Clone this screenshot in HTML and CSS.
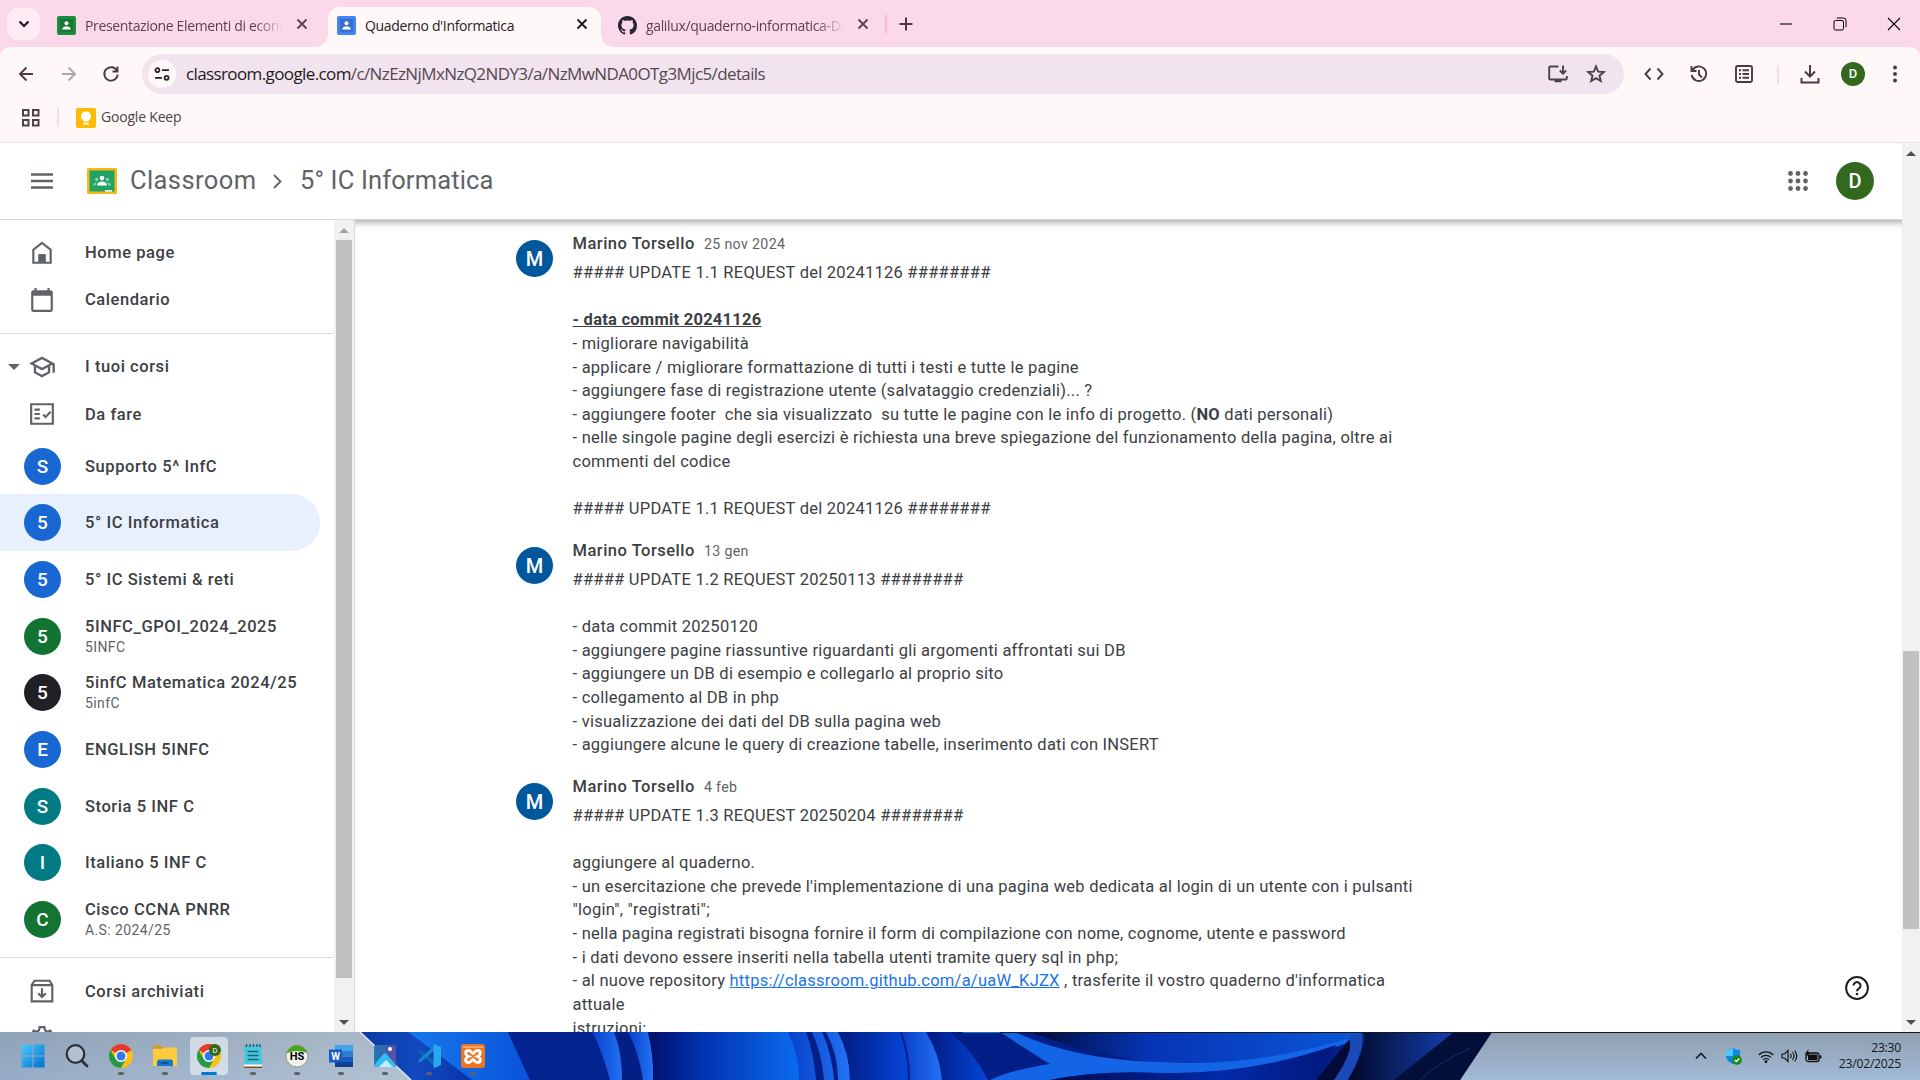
FILE: index.html
```html
<!DOCTYPE html>
<html lang="it">
<head>
<meta charset="utf-8">
<title>Quaderno d'Informatica</title>
<link rel="stylesheet" href="styles.css">
</head>
<body>
<svg class="defs" aria-hidden="true">
  <symbol id="close" viewBox="0 0 12 12"><path d="M1.5 1.5l9 9M10.5 1.5l-9 9" fill="none" stroke="currentColor" stroke-width="1.9"/></symbol>
  <symbol id="person" viewBox="0 0 20 20"><rect width="20" height="20" rx="2" fill="currentColor"/><rect x="3" y="3" width="14" height="14" fill="#000" opacity=".16"/><circle cx="10" cy="7.6" r="2.1" fill="#fff"/><path d="M5.5 14.2c0-2.3 2.4-3.4 4.5-3.4s4.500 1.100 4.500 3.400z" fill="#fff"/></symbol>
  <symbol id="chrome" viewBox="0 0 24 24"><circle cx="12" cy="12" r="12" fill="#fbc116"/><path d="M12 12L1.600 6A12 12 0 0 1 22.400 6z" fill="#e33b2e"/><path d="M1.600 6A12 12 0 0 0 12 24l5.200-9L12 12 6.800 15z" fill="#259a4a"/><circle cx="12" cy="12" r="6" fill="#fff"/><circle cx="12" cy="12" r="4.500" fill="#3479ea"/></symbol>
</svg>

<header class="browser">
  <div class="tabstrip">
    <button class="tab-search"><svg width="12" height="8" viewBox="0 0 12 8"><path d="M1.500 1.500L6 6l4.500-4.500" fill="none" stroke="#1f1a1c" stroke-width="2.200"/></svg></button>
    <div class="tab tab-first">
      <svg class="favicon green" viewBox="0 0 20 20"><use href="#person"/></svg>
      <span class="tab-title fade">Presentazione Elementi di economia</span>
      <svg class="tab-close"><use href="#close"/></svg>
    </div>
    <div class="tab tab-active">
      <svg class="favicon blue" viewBox="0 0 20 20"><use href="#person"/></svg>
      <span class="tab-title">Quaderno d'Informatica</span>
      <svg class="tab-close"><use href="#close"/></svg>
    </div>
    <div class="tab tab-last">
      <svg class="favicon" viewBox="0 0 16 16"><path fill="#24292f" d="M8 0C3.580 0 0 3.580 0 8c0 3.540 2.290 6.530 5.470 7.590.4.070.55-.17.55-.38 0-.19-.01-.82-.01-1.490-2.010.37-2.530-.49-2.690-.94-.09-.23-.48-.94-.82-1.130-.28-.15-.68-.52-.01-.53.63-.01 1.080.58 1.230.82.72 1.210 1.870.87 2.330.66.07-.52.28-.87.51-1.070-1.780-.2-3.640-.89-3.640-3.950 0-.87.31-1.590.82-2.150-.08-.2-.36-1.020.08-2.120 0 0 .67-.21 2.200.82.64-.18 1.320-.27 2-.27s1.360.09 2 .27c1.530-1.040 2.200-.82 2.200-.82.44 1.100.16 1.920.08 2.120.51.56.82 1.270.82 2.150 0 3.070-1.870 3.750-3.650 3.950.29.25.54.73.54 1.480 0 1.070-.01 1.930-.01 2.200 0 .21.15.46.55.38A8.010 8.010 0 0 0 16 8c0-4.420-3.580-8-8-8z"/></svg>
      <span class="tab-title fade">galilux/quaderno-informatica-Dev</span>
      <svg class="tab-close"><use href="#close"/></svg>
    </div>
    <i class="strip-sep"></i>
    <svg class="new-tab" viewBox="0 0 14 14"><path d="M7 .5v13M.5 7h13" stroke="#4d3946" stroke-width="2"/></svg>
    <div class="window-controls">
      <svg viewBox="0 0 14 14"><path d="M1 7h12" stroke="#000" stroke-width="1.100"/></svg>
      <svg viewBox="0 0 14 14" fill="none" stroke="#000"><rect x="1" y="3.500" width="9.500" height="9.500" rx="1.500"/><path d="M3.800 1h6.700a2.500 2.500 0 0 1 2.500 2.500v6.700"/></svg>
      <svg viewBox="0 0 14 14"><path d="M1 1l12 12M13 1L1 13" stroke="#000" stroke-width="1.100"/></svg>
    </div>
  </div>

  <div class="toolbar">
    <div class="nav-buttons">
      <svg viewBox="0 0 20 20" class="ink"><path d="M17 10H4M10.500 3.500L4 10l6.500 6.500"/></svg>
      <svg viewBox="0 0 20 20" class="ink dim"><path d="M3 10h13M9.500 3.500L16 10l-6.500 6.500"/></svg>
      <svg viewBox="0 0 20 20" class="ink"><path d="M15.800 6.500A6.700 6.700 0 1 0 16.700 10.500M16.500 2.500v5h-5"/></svg>
    </div>
    <div class="omnibox">
      <span class="site-info"><svg width="16" height="14" viewBox="0 0 16 14" fill="none" stroke="#2b2327" stroke-width="1.800"><circle cx="3.400" cy="3.200" r="2"/><path d="M8 3.200h7M1 10.800h7"/><circle cx="12.600" cy="10.800" r="2"/></svg></span>
      <span class="url"><b>classroom.google.com</b>/c/NzEzNjMxNzQ2NDY3/a/NzMwNDA0OTg3Mjc5/details</span>
      <svg viewBox="0 0 20 20" class="ink gray"><path d="M10.500 2.500H2.200a1 1 0 0 0-1 1v11a1 1 0 0 0 1 1h15.600a1 1 0 0 0 1-1V12"/><path d="M15 1.500v8M11.800 6.500L15 9.700l3.200-3.200"/><path d="M6.500 17h7" stroke-width="2.500"/></svg>
      <svg viewBox="0 0 20 20" class="ink gray"><path d="M10 2.500l2.200 5.100 5.500.5-4.200 3.600 1.300 5.400L10 14.200l-4.800 2.900 1.300-5.400-4.200-3.600 5.500-.5z"/></svg>
    </div>
    <div class="actions">
      <svg viewBox="0 0 20 20" class="ink"><path d="M6.500 4.500L1.500 10l5 5.500M13.500 4.500l5 5.500-5 5.500"/></svg>
      <svg viewBox="0 0 20 20" class="ink"><path d="M3.500 6.200A7.300 7.300 0 1 1 2.700 11M2.500 2v5h5M10 6v4.500l3 3"/></svg>
      <svg viewBox="0 0 20 20" class="ink"><rect x="2" y="2" width="16" height="16" rx="1.500"/><path d="M8.500 6.200H15M8.500 10H15M8.500 13.800H15M5 6.200h2M5 10h2M5 13.800h2"/></svg>
      <i class="bar-sep"></i>
      <svg viewBox="0 0 20 20" class="ink"><path d="M10 1v11M5 7.500l5 5 5-5M1.500 14v4.500h17V14" stroke-width="2"/></svg>
      <span class="mini-avatar">D</span>
      <svg viewBox="0 0 20 20" fill="#4d3946"><circle cx="10" cy="3.500" r="2"/><circle cx="10" cy="10" r="2"/><circle cx="10" cy="16.500" r="2"/></svg>
    </div>
  </div>

  <div class="bookmarks">
    <svg width="18" height="18" viewBox="0 0 18 18" fill="none" stroke="#4b4347" stroke-width="2"><path d="M1 1h5.500v5.500H1zM11 1h5.500v5.500H11zM1 11h5.500v5.500H1zM11 11h5.500v5.500H11z"/></svg>
    <i class="bar-sep"></i>
    <svg width="20" height="20" viewBox="0 0 20 20"><rect width="20" height="20" rx="2" fill="#fbbc04"/><path d="M10 3.500a4.800 4.800 0 0 0-2.600 8.900V13.500h5.200v-1.100A4.800 4.800 0 0 0 10 3.500zM7.400 14.800h5.200v1.700H7.400z" fill="#fff"/></svg>
    <span>Google Keep</span>
  </div>
</header>

<div class="page">
  <div class="app">
    <header class="app-bar">
      <svg width="22" height="16" viewBox="0 0 22 16"><path d="M0 1.500h22M0 8h22M0 14.500h22" stroke="#5f6368" stroke-width="2.300"/></svg>
      <svg class="logo" width="30" height="26" viewBox="0 0 30 26"><rect width="30" height="26" rx="1.500" fill="#f9b912"/><rect x="2.500" y="2.500" width="25" height="21" fill="#1fa463"/><circle cx="15" cy="10" r="2.300" fill="#fff"/><path d="M10 17c0-2.300 2.800-3.600 5-3.600s5 1.300 5 3.600v.5H10z" fill="#fff"/><g fill="#8ed0ae"><circle cx="9.700" cy="11.400" r="1.600"/><circle cx="20.300" cy="11.400" r="1.600"/><path d="M6 17.500c0-2 1.600-3 4-3.200-1 .9-1.300 1.900-1.300 3.200zM24 17.500c0-2-1.600-3-4-3.200 1 .9 1.300 1.900 1.300 3.200z"/></g><path d="M18 22h7v1.800h-7z" fill="#e9efe9"/></svg>
      <span class="brand">Classroom</span>
      <svg class="crumb" width="9" height="15" viewBox="0 0 9 15"><path d="M1 1l6.500 6.500L1 14" fill="none" stroke="#5f6368" stroke-width="1.800"/></svg>
      <span class="course-name">5° IC Informatica</span>
      <svg class="apps" width="20" height="20" viewBox="0 0 20 20" fill="#5f6368"><circle cx="2.500" cy="2.500" r="2.400"/><circle cx="10" cy="2.500" r="2.400"/><circle cx="17.500" cy="2.500" r="2.400"/><circle cx="2.500" cy="10" r="2.400"/><circle cx="10" cy="10" r="2.400"/><circle cx="17.500" cy="10" r="2.400"/><circle cx="2.500" cy="17.500" r="2.400"/><circle cx="10" cy="17.500" r="2.400"/><circle cx="17.500" cy="17.500" r="2.400"/></svg>
      <span class="avatar profile">D</span>
    </header>

    <div class="columns">
      <nav class="sidebar">
        <div class="menu">
          <div class="group">
            <a class="item"><svg viewBox="0 0 24 24"><path fill="none" stroke="currentColor" stroke-width="2" d="M4 21V9l8-6.300L20 9v12z"/><path d="M8.500 13h7v8h-7z"/></svg><span>Home page</span></a>
            <a class="item"><svg viewBox="0 0 24 24"><path d="M20 3h-1V1h-2v2H7V1H5v2H4c-1.100 0-2 .9-2 2v16c0 1.100.9 2 2 2h16c1.100 0 2-.9 2-2V5c0-1.100-.9-2-2-2zm0 18H4V8h16v13z"/></svg><span>Calendario</span></a>
          </div>
          <div class="group">
            <a class="item"><i class="expander"></i><svg class="wide" viewBox="0 0 24 24"><path d="M12 3L1 9l4 2.180v6L12 21l7-3.820v-6l2-1.090V17h2V9L12 3zm6.820 6L12 12.720 5.180 9 12 5.280 18.820 9zM17 15.990l-5 2.730-5-2.730v-3.720L12 15l5-2.730v3.720z"/></svg><span>I tuoi corsi</span></a>
            <a class="item"><svg viewBox="0 0 24 24"><path fill="none" stroke="currentColor" stroke-width="2" d="M2 3h20v18H2zM5 8h5M5 12h5M5 16h5M13 12.500l2.300 2.300L20 10"/></svg><span>Da fare</span></a>
            <a class="item course"><b class="avatar c-blue">S</b><span>Supporto 5^ InfC</span></a>
            <a class="item course selected"><b class="avatar c-blue">5</b><span>5° IC Informatica</span></a>
            <a class="item course"><b class="avatar c-blue">5</b><span>5° IC Sistemi &amp; reti</span></a>
            <a class="item course"><b class="avatar c-green">5</b><span>5INFC_GPOI_2024_2025<small>5INFC</small></span></a>
            <a class="item course"><b class="avatar c-black">5</b><span>5infC Matematica 2024/25<small>5infC</small></span></a>
            <a class="item course"><b class="avatar c-blue">E</b><span>ENGLISH 5INFC</span></a>
            <a class="item course"><b class="avatar c-teal">S</b><span>Storia 5 INF C</span></a>
            <a class="item course"><b class="avatar c-teal">I</b><span>Italiano 5 INF C</span></a>
            <a class="item course"><b class="avatar c-green">C</b><span>Cisco CCNA PNRR<small>A.S: 2024/25</small></span></a>
          </div>
          <div class="group">
            <a class="item"><svg viewBox="0 0 24 24"><path fill="none" stroke="currentColor" stroke-width="2" d="M2.500 6.500L5 2.500h14l2.500 4V21.500h-19zM2.500 6.500h19M12 9.500v8M8.500 14l3.500 3.500 3.500-3.500"/></svg><span>Corsi archiviati</span></a>
            <a class="item settings"><svg viewBox="0 0 24 24"><path fill="none" stroke="currentColor" stroke-width="2" d="M9.800 2h4.400l.6 3 2 1.200 2.900-1 2.200 3.800-2.300 2v2l2.300 2-2.200 3.800-2.900-1-2 1.200-.6 3H9.800l-.6-3-2-1.200-2.900 1L2.100 15l2.300-2v-2l-2.300-2 2.200-3.800 2.900 1 2-1.200z"/><circle cx="12" cy="12" r="3"/></svg><span>Impostazioni</span></a>
          </div>
        </div>
        <div class="scrollbar side-scroll"><i class="up off"></i><i class="thumb"></i><i class="down"></i></div>
      </nav>

      <main class="comments">
        <article class="post">
          <span class="avatar author">M</span>
          <div class="body">
            <div class="meta"><strong>Marino Torsello</strong><time>25 nov 2024</time></div>
            <p>##### UPDATE 1.1 REQUEST del 20241126 ########

<b class="due">- data commit 20241126</b>
- migliorare navigabilità
- applicare / migliorare formattazione di tutti i testi e tutte le pagine
- aggiungere fase di registrazione utente (salvataggio credenziali)... ?
- aggiungere footer  che sia visualizzato  su tutte le pagine con le info di progetto. (<b>NO</b> dati personali)
- nelle singole pagine degli esercizi è richiesta una breve spiegazione del funzionamento della pagina, oltre ai
commenti del codice

##### UPDATE 1.1 REQUEST del 20241126 ########</p>
          </div>
        </article>
        <article class="post">
          <span class="avatar author">M</span>
          <div class="body">
            <div class="meta"><strong>Marino Torsello</strong><time>13 gen</time></div>
            <p>##### UPDATE 1.2 REQUEST 20250113 ########

- data commit 20250120
- aggiungere pagine riassuntive riguardanti gli argomenti affrontati sui DB
- aggiungere un DB di esempio e collegarlo al proprio sito
- collegamento al DB in php
- visualizzazione dei dati del DB sulla pagina web
- aggiungere alcune le query di creazione tabelle, inserimento dati con INSERT</p>
          </div>
        </article>
        <article class="post">
          <span class="avatar author">M</span>
          <div class="body">
            <div class="meta"><strong>Marino Torsello</strong><time>4 feb</time></div>
            <p>##### UPDATE 1.3 REQUEST 20250204 ########

aggiungere al quaderno.
- un esercitazione che prevede l'implementazione di una pagina web dedicata al login di un utente con i pulsanti
"login", "registrati";
- nella pagina registrati bisogna fornire il form di compilazione con nome, cognome, utente e password
- i dati devono essere inseriti nella tabella utenti tramite query sql in php;
- al nuove repository <a>https://classroom.github.com/a/uaW_KJZX</a> , trasferite il vostro quaderno d'informatica
attuale
istruzioni:</p>
          </div>
        </article>
        <svg class="help" viewBox="0 0 24 24"><circle cx="12" cy="12" r="10.900" fill="none" stroke="#1f1f1f" stroke-width="2"/><path d="M8.500 9.600a3.500 3.500 0 1 1 5.300 3c-1.100.7-1.800 1.300-1.800 2.700" fill="none" stroke="#1f1f1f" stroke-width="2"/><circle cx="12" cy="18" r="1.300" fill="#1f1f1f"/></svg>
      </main>
    </div>
  </div>
  <div class="scrollbar page-scroll"><i class="up"></i><i class="thumb"></i><i class="down"></i></div>
</div>

<footer class="taskbar">
  <svg class="wallpaper" viewBox="0 0 1920 48" preserveAspectRatio="none">
    <defs>
      <linearGradient id="sky" x2="0" y2="1"><stop stop-color="#8e9fb0"/><stop offset="1" stop-color="#a3bad6"/></linearGradient>
      <linearGradient id="skyL"><stop stop-color="#8fa4bd" stop-opacity=".6"/><stop offset="1" stop-color="#bac6d2" stop-opacity=".7"/></linearGradient>
      <linearGradient id="w1"><stop stop-color="#0d3aa0"/><stop offset=".5" stop-color="#1249c0"/><stop offset="1" stop-color="#0a35a8"/></linearGradient>
      <linearGradient id="w2"><stop stop-color="#1878ec"/><stop offset="1" stop-color="#0852d8"/></linearGradient>
      <linearGradient id="w3"><stop stop-color="#020f68"/><stop offset=".35" stop-color="#0232b0"/><stop offset="1" stop-color="#0a6cf0"/></linearGradient>
      <linearGradient id="w4"><stop stop-color="#0840c8"/><stop offset="1" stop-color="#2272f4"/></linearGradient>
      <linearGradient id="w5"><stop stop-color="#021a80"/><stop offset="1" stop-color="#0546d8"/></linearGradient>
      <linearGradient id="w6"><stop stop-color="#010a38"/><stop offset=".35" stop-color="#0634b4"/><stop offset="1" stop-color="#0a58d8"/></linearGradient>
      <linearGradient id="w7"><stop stop-color="#010828"/><stop offset="1" stop-color="#1440b0"/></linearGradient>
      <linearGradient id="w8"><stop stop-color="#020a50"/><stop offset=".6" stop-color="#022aa8"/><stop offset="1" stop-color="#02187a"/></linearGradient>
    </defs>
    <rect width="1920" height="48" fill="url(#sky)"/>
    <rect width="412" height="48" fill="url(#skyL)"/>
    <path d="M360 0H1492L1460 48H411z" fill="#021f86"/>
    <path d="M360 0h48l64 48h-61z" fill="url(#w1)"/>
    <path d="M360 0l51 48" stroke="#dce8f4" stroke-width="1.500"/>
    <path d="M408 0h100l22 48h-58z" fill="url(#w2)"/>
    <path d="M508 0h86l22 48h-86z" fill="#022390"/>
    <path d="M592 0h22q8 20 8 48h-12q-8-30-18-48z" fill="url(#w4)"/>
    <path d="M628 0h20q6 24 5 48h-10q-4-28-15-48z" fill="url(#w4)"/>
    <path d="M648 0H790q10 24 10 48H653q1-24-5-48z" fill="url(#w3)"/>
    <path d="M788 0h18q8 22 10 48h-17q0-26-11-48zM812 0h10q10 22 12 48h-10q-2-26-12-48zM826 0h12q12 22 12 48h-12q0-26-12-48z" fill="url(#w4)"/>
    <path d="M838 0h62q8 22 8 48h-58q0-26-12-48z" fill="url(#w5)"/>
    <path d="M902 0h24q14 22 16 48h-32q0-26-8-48z" fill="url(#w4)"/>
    <path d="M926 0h24q26 22 38 48h-46q-2-26-16-48z" fill="url(#w5)"/>
    <path d="M950 0h80q80 30 130 30-40 4-172 18-14-28-38-48z" fill="#021f88"/>
    <path d="M1030 0H1364Q1300 30 1220 34 1120 34 1030 0z" fill="url(#w6)"/>
    <path d="M1015 0q60 28 145 30 90 6 190-24v4q-90 34-200 31-60-2-100 7h-60q20-10 60-16Q1040 26 1000 0z" fill="#1465e6"/>
    <path d="M1050 48q50-10 110-7 90 2 176-28l-20 35z" fill="url(#w8)"/>
    <path d="M1352 4l-36 44h22l18-42z" fill="#020b38"/>
    <path d="M1362 0q4 16-14 48h-14q22-32 14-42z" fill="#1a49b8"/>
    <path d="M1364 0h90l-60 48h-46q18-30 16-48z" fill="url(#w7)"/>
    <path d="M1454 0h38l-32 48h-66z" fill="#020f38"/>
    <path d="M1470 16q-34 16-50 32" stroke="#15306c" fill="none"/>
    <path d="M963 .5h37" stroke="#0876c8"/><path d="M1000 .5h920" stroke="#17191c"/>
  </svg>
  <div class="apps-row">
    <span class="tb"><svg viewBox="0 0 24 24"><defs><linearGradient id="win" x2="1" y2="1"><stop stop-color="#4fc9fb"/><stop offset="1" stop-color="#0070d0"/></linearGradient></defs><path fill="url(#win)" d="M.5.5h11v11H.5zM12.500.5h11v11h-11zM.5 12.500h11v11H.5zM12.500 12.500h11v11h-11z"/></svg></span>
    <span class="tb"><svg viewBox="0 0 24 24"><circle cx="10.500" cy="10" r="8.800" fill="#ccd8e2" fill-opacity=".5" stroke="#2c2f33" stroke-width="2.200"/><path d="M17 17l5 5" stroke="#2c2f33" stroke-width="2.800" stroke-linecap="round"/></svg></span>
    <span class="tb run"><svg viewBox="0 0 24 24"><use href="#chrome"/></svg></span>
    <span class="tb run"><svg viewBox="0 0 24 24"><path d="M0 3a1.500 1.500 0 0 1 1.500-1.500H8l2.500 3H0z" fill="#e09a12"/><path d="M0 5h9l2-1.500h11.500A1.500 1.500 0 0 1 24 5v17H0z" fill="#fccc3c"/><path d="M4 22v-4a2.500 2.500 0 0 1 2.500-2.500h11A2.500 2.500 0 0 1 20 18v4z" fill="#1578cc"/><path d="M8 19h8" stroke="#0b4d8a" stroke-width="1.500"/></svg></span>
    <span class="tb run active"><svg viewBox="0 0 24 24"><use href="#chrome"/><circle cx="18" cy="6" r="6" fill="#33691e"/><text x="18" y="8.800" font-size="7.500" fill="#fff" text-anchor="middle">D</text></svg></span>
    <span class="tb run"><svg viewBox="0 0 24 24"><path d="M3 2h18v20H3z" fill="#4cc6dc"/><path d="M3 20.500h18V24H3z" fill="#fff"/><path d="M3 22.500h18V24H3z" fill="#8a4a1c"/><path d="M5.500 0v3M9 0v3M12.500 0v3M16 0v3M19 0v3" stroke="#155a70" stroke-width="1.400"/><path d="M6.500 7.500h11M6.500 11.500h11M6.500 15.500h11" stroke="#0f6580" stroke-width="1.500"/></svg></span>
    <span class="tb run"><svg viewBox="0 0 24 24"><circle cx="12" cy="12" r="11" fill="#f1f1ea" stroke="#999"/><path d="M1.500 9a11 11 0 0 1 21 0q-10-4-21 0z" fill="#4aa41e"/><text x="12" y="15.800" font-size="11" font-weight="700" text-anchor="middle">HS</text></svg></span>
    <span class="tb run"><svg viewBox="0 0 24 24"><path d="M6 1h18v6H6z" fill="#41a5ee"/><path d="M6 7h18v5.500H6z" fill="#2b7cd3"/><path d="M6 12.500h18V18H6z" fill="#185abd"/><path d="M6 18h18v5H6z" fill="#103f91"/><rect y="5.500" width="13" height="13" fill="#185abd"/><text x="6.500" y="15.500" font-size="10" font-weight="700" fill="#fff" text-anchor="middle">W</text></svg></span>
    <span class="tb run"><svg viewBox="0 0 24 24"><defs><linearGradient id="ph" x2="1"><stop stop-color="#1b78b8"/><stop offset="1" stop-color="#5b4fa4"/></linearGradient></defs><rect x="1" y="1" width="22" height="22" rx="2" fill="url(#ph)"/><path d="M1 21L10.500 10q1.500-1.500 3 0L23 21q-1 2-2 2H3q-2 0-2-2z" fill="#35bdf0"/><path d="M6 23l7-7 7 7z" fill="#c0eef8"/><circle cx="17" cy="5" r="2" fill="#fff"/></svg></span>
    <span class="tb run"><svg viewBox="0 0 24 24"><path d="M1 7l2-1.500 15 12.500v5z" fill="#0b6cb4"/><path d="M1 16.500L3 18.500 18 6V1z" fill="#1688d0"/><path d="M17.500 0L24 3v18l-6.500 3-1-1V1z" fill="#27a8ee"/></svg></span>
    <span class="tb run"><svg viewBox="0 0 24 24"><rect width="24" height="24" rx="3" fill="#ee7420"/><path d="M2 2h20v2H2z" fill="#f5a468"/><path d="M7.500 12.500C3.500 11 4 6.500 7.500 6.500c3 0 3 3 4.500 3s1.500-3 4.500-3c3.500 0 4 4.500 0 6 4 1.500 3.500 6 0 6-3 0-3-3-4.500-3s-1.500 3-4.500 3c-3.500 0-4-4.500 0-6z" fill="none" stroke="#fff" stroke-width="2.800"/></svg></span>
  </div>
  <div class="tray">
    <svg width="12" height="8" viewBox="0 0 12 8"><path d="M1 6.500l5-5 5 5" fill="none" stroke="#16191c" stroke-width="1.600"/></svg>
    <svg class="shield" width="16" height="17" viewBox="0 0 16 17"><path d="M7 0q3 2 7 2v6q0 5-7 8-7-3-7-8V2q4 0 7-2z" fill="#1286de"/><path d="M7 0v8H0V2q4 0 7-2z" fill="#4cc8f6"/><circle cx="11" cy="12" r="4.800" fill="#148a20"/><path d="M8.800 12l1.600 1.600 3-3" fill="none" stroke="#fff" stroke-width="1.400"/></svg>
    <svg width="16" height="13" viewBox="0 0 16 13" fill="none" stroke="#16191c" stroke-width="1.200"><path d="M.8 5a10 10 0 0 1 14.400 0M3 7.500a7 7 0 0 1 10 0M5.200 9.700a4 4 0 0 1 5.600 0"/><circle cx="8" cy="11.500" r=".9" fill="#16191c"/></svg>
    <svg width="17" height="14" viewBox="0 0 17 14" fill="none" stroke="#16191c" stroke-width="1.200"><path d="M1 5h2.500L7 1.500v11L3.500 9H1zM9.300 4.800q1.600 2.200 0 4.400M11.500 3q3 4 0 8M13.700 1.500q4 5.500 0 11"/></svg>
    <svg width="17" height="14" viewBox="0 0 17 14"><rect x="1" y="4" width="13" height="8.500" rx="2" fill="none" stroke="#111" stroke-width="1.300"/><rect x="3" y="5.500" width="9.500" height="5.500" fill="#111"/><path d="M15.500 6.500v3" stroke="#111" stroke-width="1.800"/><path d="M3.500 0L0 5h2L1 8.500 5 3.500H3z" fill="#111"/></svg>
    <div class="clock"><span>23:30</span><span>23/02/2025</span></div>
  </div>
</footer>
</body>
</html>
```
FILE: styles.css
```css
* { box-sizing: border-box; }
body {
  margin: 0;
  width: 1920px;
  height: 1080px;
  overflow: hidden;
  display: flex;
  flex-direction: column;
  background: #fff;
  font-family: Roboto, "Liberation Sans", sans-serif;
}
.defs { display: none; }
svg { flex: none; display: block; }

/* Browser frame */
.browser {
  flex: none;
  height: 143px;
  background: #fbd9ea;
  border-bottom: 1px solid #efdfea;
  font-family: "Open Sans", "Noto Sans", sans-serif;
}
.tabstrip { height: 47px; display: flex; align-items: center; padding-left: 7px; }
.tab-search {
  width: 33px; height: 32px; border: 0; padding: 0; border-radius: 11px;
  background: #feebf4; display: grid; place-items: center;
}
.tab { display: flex; align-items: center; height: 40px; align-self: flex-end; padding-bottom: 6px; color: #5b4350; }
.tab-first { width: 288px; padding-left: 17px; }
.tab-active {
  position: relative; width: 273px; padding-left: 9px;
  background: #fff8f8; border-radius: 12px 12px 0 0; color: #2b2024;
}
.tab-active::before, .tab-active::after {
  content: ""; position: absolute; bottom: 0; width: 12px; height: 12px;
}
.tab-active::before { left: -12px; background: radial-gradient(circle at 0 0, transparent 11.5px, #fff8f8 12px); }
.tab-active::after { right: -12px; background: radial-gradient(circle at 100% 0, transparent 11.5px, #fff8f8 12px); }
.tab-last { width: 278px; padding-left: 17px; }
.favicon { width: 19px; height: 19px; margin-top: 2px; }
.green { color: #1e8e3e; }
.blue { color: #4285f4; }
.tab-title {
  width: 198px; margin-left: 9px; margin-top: 3px; overflow: hidden; white-space: nowrap;
  font-size: 14px; line-height: 20px; letter-spacing: -.35px;
}
.fade { -webkit-mask-image: linear-gradient(90deg, #000 86%, transparent); mask-image: linear-gradient(90deg, #000 86%, transparent); }
.tab-close { width: 12px; height: 12px; margin-left: 13px; }
.tab-active .tab-close { color: #1f1a1c; }
.strip-sep { width: 2px; height: 18px; margin-left: 6px; background: #ffb0dc; }
.new-tab { width: 14px; height: 14px; margin-left: 12px; }
.window-controls { margin-left: auto; margin-right: 19px; display: flex; gap: 40px; }
.window-controls svg { width: 14px; height: 14px; }

.toolbar {
  height: 54px; display: flex; align-items: center;
  background: #fff8f8; border-radius: 10px 10px 0 0;
}
.ink { width: 20px; height: 20px; fill: none; stroke: #4d3946; stroke-width: 1.9; }
.dim { stroke: #b3a5ab; }
.gray { stroke: #4b4347; }
.nav-buttons { display: flex; gap: 22.5px; padding-left: 16px; width: 142px; }
.omnibox {
  width: 1482px; height: 40px; border-radius: 20px; background: #f1e4ee;
  display: flex; align-items: center; padding: 0 18px 0 6px;
}
.site-info { width: 28px; height: 28px; border-radius: 50%; background: #fff8f8; display: grid; place-items: center; }
.url { margin-left: 10px; margin-right: auto; margin-top: -2px; font-size: 17px; letter-spacing: -.61px; color: #564851; }
.url b { font-weight: 400; color: #1f1a1c; }
.omnibox .ink + .ink { margin-left: 18px; }
.actions { display: flex; align-items: center; padding-left: 20px; }
.actions .ink { margin-right: 25px; }
.bar-sep { width: 2px; height: 19px; background: #ffd6ec; border-radius: 1px; }
.actions .bar-sep { margin: 0 21px 0 -2px; }
.actions .bar-sep + .ink { margin-right: 21px; }
.mini-avatar {
  width: 24px; height: 24px; border-radius: 50%; background: #33691e; color: #fff;
  font: 500 13px/24px Roboto, sans-serif; text-align: center; margin-right: 20px;
}
.actions > svg:last-child { width: 20px; height: 20px; }
.bookmarks {
  height: 41px; background: #fff8f8; display: flex; align-items: flex-start; padding: 7px 0 0 22px;
  font-size: 14px; line-height: 20px; letter-spacing: -.2px; color: #4b4347;
}
.bookmarks > svg:first-child { margin-top: 1px; }
.bookmarks .bar-sep { margin: 0 17px 0 17px; }
.bookmarks span { margin: -1px 0 0 5px; }

/* Page */
.page { flex: 1; min-height: 0; display: flex; }
.app { width: 1902px; display: flex; flex-direction: column; }
.app-bar {
  position: relative; z-index: 1; flex: none; height: 77px; display: flex; align-items: center;
  padding: 0 28px 0 31px; background: #fff; border-bottom: 1px solid #d6d8da;
  font-size: 25.5px; color: #5f6368;
}
.logo { margin-left: 34px; }
.brand { margin: -2px 0 0 13px; width: 126px; letter-spacing: .4px; }
.crumb { margin-left: 17px; }
.course-name { margin: -2px 0 0 18px; letter-spacing: .14px; }
.apps { margin-left: auto; margin-right: 28px; }
.avatar {
  flex: none; width: 37px; height: 37px; border-radius: 50%; color: #fff;
  font-size: 20px; font-weight: 500; line-height: 38px; text-align: center;
}
.profile { width: 38px; height: 38px; background: #33691e; }
.columns { flex: 1; min-height: 0; display: flex; }

.sidebar { width: 355px; display: flex; border-right: 1px solid #dadce0; background: #fff; }
.menu { width: 334px; overflow: hidden; }
.group { padding: 9px 0; }
.group + .group { border-top: 1px solid #dadce0; padding-top: 9.5px; }
.item {
  position: relative; height: 47.3px; display: flex; align-items: center; padding-left: 29px;
  color: #3c4043; font-size: 16.5px; font-weight: 500; letter-spacing: .57px;
}
.item svg { width: 26px; height: 26px; margin-right: 30px; fill: #5f6368; color: #5f6368; }
.item svg.wide { width: 28px; height: 28px; margin: 0 29px 0 -1px; }
.item span { line-height: 20px; margin-top: 1px; white-space: nowrap; }
.item.settings span { margin-top: 4px; }
.expander {
  position: absolute; left: 8px; top: 21px;
  border: 6px solid transparent; border-top-color: #5f6368; border-bottom: 0;
}
.course { height: 56.7px; padding-left: 24px; }
.course .avatar { margin-right: 24px; font-size: 19px; line-height: 37px; letter-spacing: 0; }
.selected { width: 320px; background: #e8f0fe; border-radius: 0 28px 28px 0; }
small { display: block; font-size: 14px; font-weight: 400; letter-spacing: .4px; color: #5f6368; line-height: 20px; }
.c-blue { background: #1967d2; }
.c-green { background: #137333; }
.c-black { background: #202124; }
.c-teal { background: #007b83; }

.scrollbar { background: #f1f1f1; display: flex; flex-direction: column; align-items: center; }
.scrollbar .up { border: 5px solid transparent; border-bottom-color: #505050; border-top: 0; margin-top: 8px; }
.scrollbar .up.off { border-bottom-color: #a3a3a3; }
.scrollbar .down { border: 5px solid transparent; border-top-color: #505050; border-bottom: 0; margin: auto 0 7px; }
.thumb { background: #c1c1c1; width: 16px; }
.side-scroll { width: 20px; }
.side-scroll .thumb { height: 738px; margin-top: 7px; }
.page-scroll { width: 18px; }
.page-scroll .thumb { height: 278px; margin-top: 495px; }

.comments {
  position: relative; flex: 1; overflow: hidden; padding: 11px 0 0 161px;
  box-shadow: inset 0 8px 7px -6px rgba(60, 64, 67, .5);
}
.post { display: flex; margin-bottom: 17px; }
.author { margin: 9px 19.500px 0 0; background: #01579b; }
.meta { height: 29px; line-height: 24px; display: flex; color: #3c4043; }
.meta strong { font-size: 16.5px; font-weight: 500; letter-spacing: .5px; }
.meta time { margin-left: 9px; font-size: 14.2px; letter-spacing: .35px; color: #5f6368; }
.body { padding-top: 1px; }
.body p { margin: 0; white-space: pre; font-size: 16.5px; line-height: 23.63px; letter-spacing: .245px; color: #3c4043; }
.due { text-decoration: underline; }
.body a { color: #1a73e8; text-decoration: underline; }
.help { position: absolute; right: 33px; bottom: 32px; width: 24px; height: 24px; }

/* Taskbar */
.taskbar { position: relative; flex: none; height: 48px; display: flex; justify-content: space-between; background: #9aaec6; }
.wallpaper { position: absolute; inset: 0; width: 1920px; height: 48px; }
.apps-row { position: relative; display: flex; align-items: center; gap: 6px; padding-left: 14px; }
.tb { position: relative; width: 38px; height: 38px; border-radius: 4px; display: grid; place-items: center; }
.tb svg { width: 24px; height: 24px; }
.active { background: rgba(235, 241, 247, .65); }
.run::after {
  content: ""; position: absolute; bottom: 0; left: 16px; width: 6px; height: 3px; border-radius: 2px; background: #5c6268;
}
.active::after { left: 11px; width: 16px; background: #0078d4; }
.tray { position: relative; display: flex; align-items: center; padding-right: 19px; }
.tray svg + svg { margin-left: 7px; }
.tray .shield { margin-left: 19px; margin-right: 9px; }
.clock {
  display: flex; flex-direction: column; align-items: flex-end; width: 79px;
  font: 12.2px/16px "Open Sans", "Noto Sans", sans-serif; letter-spacing: -.25px; color: #14171a;
}
```
